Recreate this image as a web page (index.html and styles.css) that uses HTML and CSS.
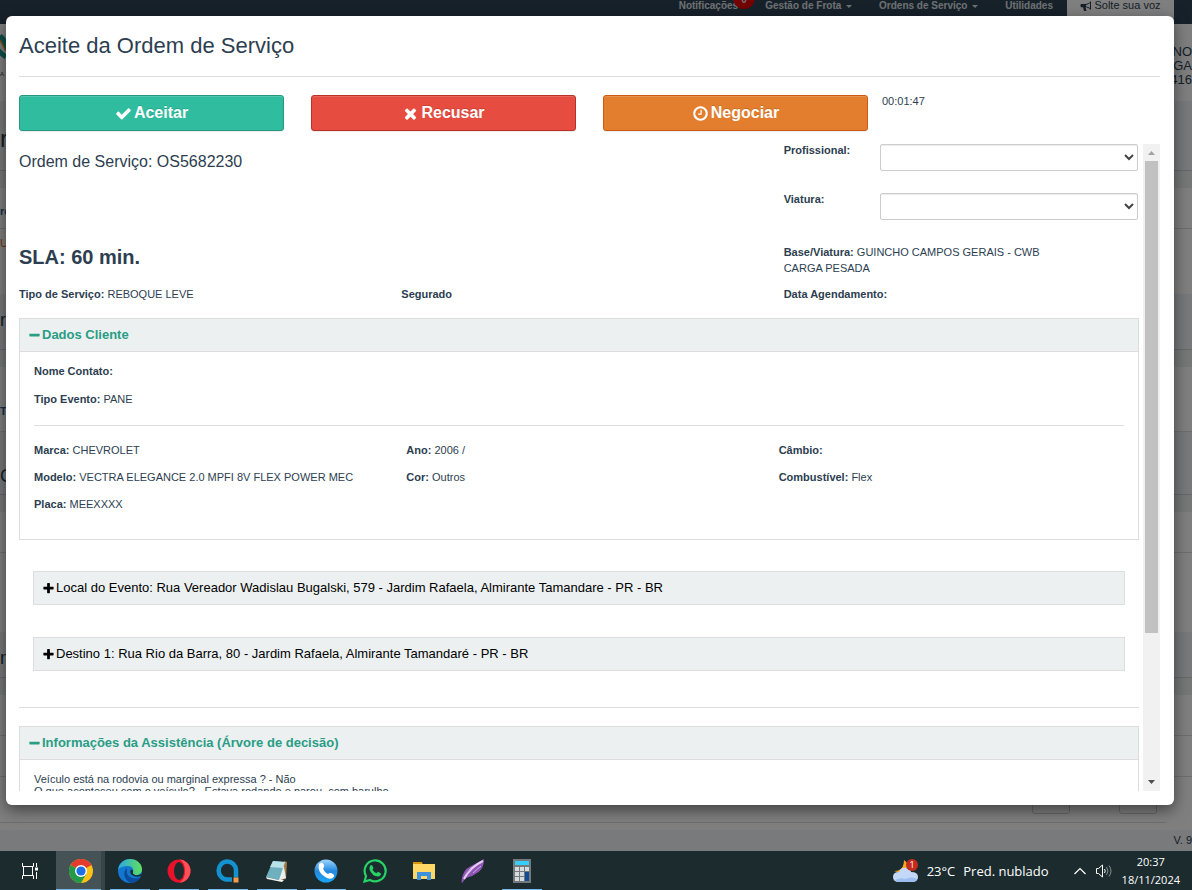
FILE: index.html
```
<!DOCTYPE html>
<html lang="pt-BR">
<head>
    <meta charset="UTF-8">
    <meta name="viewport" content="width=device-width, initial-scale=1.0">
    <title>Aceite da Ordem de Serviço</title>
    <link rel="stylesheet" href="styles.css">
</head>
<body>
    <svg class="sprite" aria-hidden="true">
        <symbol id="plus" viewBox="0 0 1792 1792"><path d="M1600 736v192q0 40-28 68t-68 28h-416v416q0 40-28 68t-68 28h-192q-40 0-68-28t-28-68v-416h-416q-40 0-68-28t-28-68v-192q0-40 28-68t68-28h416v-416q0-40 28-68t68-28h192q40 0 68 28t28 68v416h416q40 0 68 28t28 68z"/></symbol>
        <symbol id="minus" viewBox="0 0 1792 1792"><path d="M1600 736v192q0 40-28 68t-68 28h-1216q-40 0-68-28t-28-68v-192q0-40 28-68t68-28h1216q40 0 68 28t28 68z"/></symbol>
    </svg>

    <div class="browser">
        <!-- pagina atras do modal -->
        <div class="page">
            <nav class="navbar">
                <a href="#">Notificações<span class="badge">0</span></a>
                <a href="#">Gestão de Frota <i class="caret"></i></a>
                <a href="#">Ordens de Serviço <i class="caret"></i></a>
                <a href="#">Utilidades</a>
                <button class="voz" type="button">
                    <svg viewBox="0 0 12 12"><path d="M11 1v9C9 8 7.500 7.400 5.500 7.200L6.500 11H4L3 7.200H1.500Q.5 7.200.5 6V5Q.5 4 1.500 4H5C7.500 4 9.500 3 11 1zM10 3C8.500 4.300 7.300 4.700 6 4.900v1.500C7.500 6.600 8.800 7.100 10 8z" fill-rule="evenodd"/></svg>
                    Solte sua voz
                </button>
            </nav>
            <div class="top">
                <div class="logo">
                    <svg viewBox="0 0 24 28"><path d="M0 2Q9 3 15 18" fill="none" stroke="#e8a33a" stroke-width="5"/><path d="M0 5Q2 17 14 25M8 4Q14 8 18 24" fill="none" stroke="#1a9c94" stroke-width="5"/></svg>
                    <span>A</span>
                </div>
                <div class="user">RNO<br>RGA<br>416</div>
            </div>
            <div class="row head">r</div>
            <div class="row gap"></div>
            <div class="row line blue">re</div>
            <div class="row tall orange">U</div>
            <div class="row head small">r</div>
            <div class="row gap"></div>
            <div class="row line tall blue">T</div>
            <div class="row head small end">C</div>
            <div class="row gap"></div>
            <div class="row line"></div>
            <div class="row taller"></div>
            <div class="row head small last">m</div>
            <div class="row gap"></div>
            <div class="row line"></div>
            <div class="row line"></div>
            <div class="row line pager"><button type="button" aria-label="Anterior"></button><button type="button" aria-label="Próximo"></button></div>
            <div class="footer">V. 9</div>
        </div>

        <div class="backdrop"></div>

        <div class="modal" role="dialog" aria-labelledby="titulo">
            <h1 id="titulo">Aceite da Ordem de Serviço</h1>
            <div class="actions">
                <button class="btn green" type="button"><svg viewBox="0 0 1792 1792"><path d="M1671 566q0 40-28 68l-724 724-136 136q-28 28-68 28t-68-28l-136-136-362-362q-28-28-28-68t28-68l136-136q28-28 68-28t68 28l294 295 656-657q28-28 68-28t68 28l136 136q28 28 28 68z"/></svg>Aceitar</button>
                <button class="btn red" type="button"><svg viewBox="0 0 1792 1792"><path d="M1490 1322q0 40-28 68l-136 136q-28 28-68 28t-68-28l-294-294-294 294q-28 28-68 28t-68-28l-136-136q-28-28-28-68t28-68l294-294-294-294q-28-28-28-68t28-68l136-136q28-28 68-28t68 28l294 294 294-294q28-28 68-28t68 28l136 136q28 28 28 68t-28 68l-294 294 294 294q28 28 28 68z"/></svg>Recusar</button>
                <button class="btn orange-btn" type="button"><svg viewBox="0 0 1792 1792"><path d="M1024 544v448q0 14-9 23t-23 9h-320q-14 0-23-9t-9-23v-64q0-14 9-23t23-9h224v-352q0-14 9-23t23-9h64q14 0 23 9t9 23zm416 352q0-148-73-273t-198-198-273-73-273 73-198 198-73 273 73 273 198 198 273 73 273-73 198-198 73-273zm224 0q0 209-103 385.500t-279.500 279.500-385.500 103-385.500-103-279.500-279.500-103-385.500 103-385.500 279.500-279.500 385.500-103 385.500 103 279.500 279.500 103 385.500z"/></svg>Negociar</button>
                <span class="timer">00:01:47</span>
            </div>

            <div class="scroll">
                <div class="content">
                    <div class="cols intro">
                        <div class="os">
                            <h2>Ordem de Serviço: OS5682230</h2>
                        </div>
                        <form class="fields">
                            <label for="prof">Profissional:</label>
                            <select id="prof"><option></option></select>
                            <label for="viatura">Viatura:</label>
                            <select id="viatura"><option></option></select>
                        </form>
                    </div>
                    <div class="cols sla">
                        <h3>SLA: 60 min.</h3>
                        <span></span>
                        <p><b>Base/Viatura:</b> GUINCHO CAMPOS GERAIS - CWB<br>CARGA PESADA</p>
                    </div>
                    <div class="cols tipo">
                        <p><b>Tipo de Serviço:</b> REBOQUE LEVE</p>
                        <p><b>Segurado</b></p>
                        <p><b>Data Agendamento:</b></p>
                    </div>

                    <div class="panel">
                        <a class="panel-head" href="#"><svg><use href="#minus"/></svg>Dados Cliente</a>
                        <div class="panel-body">
                            <div class="contato">
                                <p><b>Nome Contato:</b></p>
                                <p><b>Tipo Evento:</b> PANE</p>
                            </div>
                            <div class="cols veiculo">
                                <p><b>Marca:</b> CHEVROLET</p>
                                <p><b>Ano:</b> 2006 /</p>
                                <p><b>Câmbio:</b></p>
                                <p><b>Modelo:</b> VECTRA ELEGANCE 2.0 MPFI 8V FLEX POWER MEC</p>
                                <p><b>Cor:</b> Outros</p>
                                <p><b>Combustível:</b> Flex</p>
                                <p><b>Placa:</b> MEEXXXX</p>
                            </div>
                        </div>
                    </div>

                    <div class="locais">
                        <a class="local" href="#"><svg><use href="#plus"/></svg>Local do Evento: Rua Vereador Wadislau Bugalski, 579 - Jardim Rafaela, Almirante Tamandare - PR - BR</a>
                        <a class="local" href="#"><svg><use href="#plus"/></svg>Destino 1: Rua Rio da Barra, 80 - Jardim Rafaela, Almirante Tamandaré - PR - BR</a>
                    </div>

                    <div class="panel">
                        <a class="panel-head" href="#"><svg><use href="#minus"/></svg>Informações da Assistência (Árvore de decisão)</a>
                        <div class="panel-body info">
                            Veículo está na rodovia ou marginal expressa ? - Não<br>
                            O que aconteceu com o veículo? - Estava rodando e parou, com barulho
                        </div>
                    </div>
                </div>
                <div class="bar">
                    <svg class="up" viewBox="0 0 17 17"><path d="M5 11h7L8.500 7z"/></svg>
                    <div class="track"><div class="thumb"></div></div>
                    <svg class="down" viewBox="0 0 17 17"><path d="M5 6h7L8.500 10z"/></svg>
                </div>
            </div>
        </div>
    </div>

    <div class="taskbar">
        <button class="task view" type="button" aria-label="Visão de tarefas"><svg viewBox="0 0 24 24" fill="none" stroke="#fff"><path d="M4.500 4v3.500h11V4M4.500 20v-3.500h11V20M5.500 7.500v9M14.500 7.500v9M18.500 4v4M18.500 13v7"/><path d="M17 8.500h3v3h-3z" fill="#fff" stroke="none"/></svg></button>
        <button class="task open current" type="button" aria-label="Chrome"><svg viewBox="0 0 24 24"><circle cx="12" cy="12" r="12" fill="#fbc116"/><path d="M12 12 1.600 6A12 12 0 0 1 22.400 6z" fill="#e33b2e"/><path d="M1.600 6A12 12 0 0 0 12 24l5.200-9L12 12z" fill="#229a49"/><path d="M12 6h10.400L17 8z" fill="#e33b2e"/><circle cx="12" cy="12" r="6" fill="#fff"/><circle cx="12" cy="12" r="4.600" fill="#1d6fe8"/></svg></button>
        <button class="task open" type="button" aria-label="Edge"><svg viewBox="0 0 24 24"><defs><linearGradient id="e1" x1="0" x2="1"><stop stop-color="#2aa6e8"/><stop offset="1" stop-color="#5fe05a"/></linearGradient></defs><circle cx="12" cy="12" r="12" fill="#1377cf"/><path d="M0 11C1 4 6 0 12 0c7 0 12 5 12 10 0 4-3 6-6 6-3 0-4-1-3-3 1-3-1-6-5-6C5 7 1 9 0 11z" fill="url(#e1)"/><path d="M9 9c-5 4-3 12 4 15 4 0 8-3 10-6-5 3-13 1-14-4-.3-2 0-3.500 0-5z" fill="#0c4c9c"/><path d="M13 10.500q-2 3 1 5.500 4 3 9 1l1.500-2.500q-4 2.500-7.500 1.500-3-1-2-3.300.5-1.700-2-2.200z" fill="#1b2b2e"/></svg></button>
        <button class="task open" type="button" aria-label="Opera"><svg viewBox="0 0 24 24"><ellipse cx="12" cy="12" rx="11.500" ry="11.500" fill="#e8132b"/><path d="M12 .5a11.500 11.500 0 0 1 0 23c4-1 6-6 6-11.500S16 1.500 12 .5z" fill="#ff5058"/><ellipse cx="12" cy="12" rx="5" ry="9" fill="#1b2b2e"/></svg></button>
        <button class="task open" type="button" aria-label="Atendimento"><svg viewBox="0 0 24 24"><path d="M20 18.500V11A8.700 9 0 1 0 11 20.500h5" fill="none" stroke="#1492d0" stroke-width="4.500"/><path d="M17.500 18.500h5v5h-5z" fill="#f59a4a"/></svg></button>
        <button class="task open" type="button" aria-label="Bloco de notas"><svg viewBox="0 0 24 24"><path d="M19 2l3 1-1 17-5 1z" fill="#a67a43"/><path d="M18 3l3 16-8 3z" fill="#e9eef0"/><path d="M8 2l12 1-6 18L1 18z" fill="#6fb0be"/><path d="M8 2l12 1-2 6-13-1z" fill="#b9e2e9"/><path d="M1 18l13 3 5 0-2 2-15-3z" fill="#f5f5f0"/></svg></button>
        <button class="task open" type="button" aria-label="Telefone"><svg viewBox="0 0 24 24"><defs><linearGradient id="p1" x2="0" y2="1"><stop stop-color="#9bd6ff"/><stop offset=".5" stop-color="#2488de"/><stop offset="1" stop-color="#19a5f2"/></linearGradient></defs><circle cx="12" cy="12" r="11.500" fill="url(#p1)"/><path d="M5 5q3-3 4.500 0 1.500 3-.5 4 1 4 5 6 2-2 5 0 2.500 2-.5 4-3 2-8-1.500Q3 13 5 5z" fill="#fff"/></svg></button>
        <button class="task" type="button" aria-label="WhatsApp"><svg viewBox="0 0 24 24"><path d="M1.500 22.500 3 17a10.500 10.500 0 1 1 4 4z" fill="none" stroke="#25d366" stroke-width="2.200"/><path d="M7 7q1.500-2 2.500 0l1 2.200-1 1.600q1.500 2.500 4 3.500l1.300-1.500 3 1.500q.5 3-3 3.300Q9 17 6.500 10.500 6.300 8.500 7 7z" fill="#25d366"/></svg></button>
        <button class="task" type="button" aria-label="Arquivos"><svg viewBox="0 0 24 24"><path d="M1 3h9l1 3H1z" fill="#d9920c"/><path d="M1 5h22v15H1z" fill="#ffd767"/><path d="M5 20v-7h14v8h-4v-4H9v4H5z" fill="#3b91dd"/></svg></button>
        <button class="task" type="button" aria-label="Pluma"><svg viewBox="0 0 24 24"><path d="M23 0q0 10-7 14-5 4-11 5l-4 5-.5-1Q1 11 10 7 16 4 23 0z" fill="#8e55b5"/><path d="M22 2Q9 8 3 20" fill="none" stroke="#e6cdf2" stroke-width="2"/><path d="M20 7 12 14M10 10 5 15" stroke="#cda6e2" fill="none"/></svg></button>
        <button class="task open" type="button" aria-label="Calculadora"><svg viewBox="0 0 24 24"><path d="M3 0h18v24H3z" fill="#73797d"/><path d="M5 2h14v4H5z" fill="#35cdfa"/><path d="M5 8h4v4H5zM10 8h4v4h-4zM15 8h4v4h-4zM5 13h4v4H5zM10 13h4v4h-4zM5 18h4v4H5zM10 18h4v4h-4z" fill="#d6dbde"/><path d="M15 13h4v9h-4z" fill="#114d91"/></svg></button>

        <div class="tray">
            <svg class="weather" viewBox="0 0 26 24"><path d="M11 1q6 4 2 9-5 5-12 2 7 0 9-5Q11 4 11 1z" fill="#f7a823"/><path d="M6 23q-6 0-6-5t6-5q2-5 7-4 5 1 5 4 7 0 7 5 0 5-6 5z" fill="#c3d8f8"/><path d="M2 21q5-3 10-1 7-3 12 0-1 3-5 3H6q-3 0-4-2z" fill="#9dbdf0"/><circle cx="19" cy="6" r="6" fill="#c42b1c"/><text x="19" y="9" text-anchor="middle" font-size="9" fill="#fff">1</text></svg>
            <span class="temp">23°C</span>
            <span class="cond">Pred. nublado</span>
            <svg class="chev" viewBox="0 0 12 12"><path d="M.5 9 6 3.500 11.500 9" fill="none" stroke="#fff" stroke-width="1.200"/></svg>
            <svg class="sound" viewBox="0 0 18 16" fill="none" stroke="#fff"><path d="M1.500 5.500h2l4-3.500v12l-4-3.500h-2z"/><path d="M9.500 6q1.500 2 0 4"/><path d="M11.500 4q3 4 0 8M14 2.500q4 5.500 0 11" stroke="#84908f"/></svg>
            <div class="clock">20:37<br>18/11/2024</div>
        </div>
    </div>
</body>
</html>
```
FILE: styles.css
```
* {
    box-sizing: border-box;
    margin: 0;
    padding: 0;
}
body {
    display: flex;
    flex-direction: column;
    height: 100vh;
    overflow: hidden;
    font: 11px/16px "Liberation Sans", Arial, sans-serif;
    color: #2c3e50;
}
a {
    color: inherit;
    text-decoration: none;
}
button {
    border: 0;
    font-family: inherit;
}
.sprite {
    display: none;
}
.browser {
    position: relative;
    flex: 1;
    min-height: 0;
    overflow: hidden;
    background-color: #fff;
}

/* pagina de fundo */
.page {
    display: flex;
    flex-direction: column;
    height: 100%;
}
.navbar {
    display: flex;
    justify-content: flex-end;
    gap: 27px;
    height: 24px;
    padding-right: 18px;
    background-color: #2f4254;
    color: #dfe3e6;
    font-size: 10px;
    font-weight: bold;
    line-height: 12px;
}
.navbar a {
    position: relative;
}
.badge {
    position: absolute;
    top: -13px;
    right: -17px;
    width: 22px;
    height: 22px;
    border-radius: 50%;
    background-color: #e80000;
    text-align: center;
    line-height: 26px;
}
.caret {
    display: inline-block;
    margin-left: 2px;
    border: 3px solid transparent;
    border-top-color: #dfe3e6;
    border-bottom: 0;
    vertical-align: middle;
}
.voz {
    display: flex;
    justify-content: center;
    gap: 2px;
    width: 107px;
    margin-left: -13px;
    background-color: #fff;
    color: #2c3e50;
    font-size: 11px;
    line-height: 11px;
}
.voz svg {
    width: 12px;
    height: 12px;
    fill: #2c3e50;
}
.top {
    display: flex;
    justify-content: space-between;
    height: 77px;
    background-color: #fff;
}
.logo {
    width: 6px;
    padding-top: 8px;
    overflow: hidden;
    font-size: 6px;
    line-height: 16px;
}
.logo svg {
    width: 24px;
    height: 28px;
    margin-left: -8px;
}
.user {
    padding-top: 21px;
    font-size: 13px;
    line-height: 14px;
    text-align: right;
}
.row {
    flex: 0 0 auto;
    height: 44px;
    line-height: 46px;
}
.row.line {
    height: 41px;
    border-bottom: 1px solid #ddd;
}
.row.tall {
    height: 65px;
    line-height: 28px;
}
.row.taller {
    height: 79px;
}
.row.head {
    height: 70px;
    border-bottom: 1px solid #ccd1d3;
    background-color: #f1f3f6;
    font-size: 24px;
    line-height: 76px;
}
.row.head.small {
    height: 56px;
    font-size: 18px;
    line-height: 52px;
}
.row.head.end {
    height: 63px;
    line-height: 88px;
}
.row.head.last {
    height: 46px;
}
.row.gap {
    height: 17px;
    background-color: #ecf0f1;
}
.row.line.tall {
    line-height: 88px;
}
.blue {
    color: #2c5d9c;
    font-weight: bold;
}
.orange {
    color: #d96a1c;
}
.row.pager {
    display: flex;
    flex: 1;
    justify-content: flex-end;
    gap: 49px;
    margin-right: 26px;
    padding-bottom: 8px;
    padding-right: 9px;
}
.pager button {
    align-self: flex-end;
    width: 38px;
    height: 32px;
    border: 1px solid #ccc;
    border-radius: 3px;
    background-color: #fff;
}
.footer {
    height: 21px;
    margin-top: 7px;
    background-color: #f2f4f6;
    text-align: right;
    line-height: 21px;
}

.backdrop {
    position: absolute;
    inset: 0;
    background-color: rgba(0, 0, 0, .5);
}
.modal {
    position: absolute;
    inset: 16px 18px 46px 6px;
    display: flex;
    flex-direction: column;
    padding: 0 14px 14px 13px;
    border-radius: 6px;
    background-color: #fff;
    box-shadow: 0 5px 15px rgba(0, 0, 0, .5);
}
.modal h1 {
    height: 61px;
    border-bottom: 1px solid #ddd;
    font-size: 22px;
    font-weight: normal;
    line-height: 59px;
}
.actions {
    display: grid;
    grid-template-columns: repeat(4, 1fr);
    gap: 27px;
    padding: 18px 0 13px;
}
.btn {
    display: flex;
    align-items: center;
    justify-content: center;
    gap: 2px;
    height: 36px;
    border: 1px solid #26987f;
    border-radius: 3px;
    color: #fff;
    font-size: 16px;
    font-weight: bold;
    text-shadow: 0 -1px 0 rgba(0, 0, 0, .15);
    box-shadow: inset 0 1px 0 rgba(255, 255, 255, .15), 0 1px 1px rgba(0, 0, 0, .08);
}
.btn svg {
    width: 17px;
    height: 17px;
    fill: #fff;
}
.green {
    background-color: #2fbc9f;
}
.red {
    border-color: #b73328;
    background-color: #e64c3f;
}
.orange-btn {
    border-color: #ce5a12;
    background-color: #e27e2e;
}
.timer {
    margin-left: -13px;
    line-height: 13px;
}

.scroll {
    display: flex;
    flex: 1;
    gap: 4px;
    min-height: 0;
}
.content {
    flex: 1;
    overflow: hidden;
}
.cols {
    display: grid;
    grid-template-columns: repeat(3, 1fr);
    column-gap: 27px;
}
.os {
    grid-column: span 2;
}
.intro {
    height: 100px;
}
.intro h2 {
    font-size: 16px;
    font-weight: normal;
    line-height: 36px;
}
.fields {
    display: grid;
    grid-template-columns: 96px 1fr;
    grid-auto-rows: 27px;
    row-gap: 22px;
    padding-right: 1px;
    font-weight: bold;
    line-height: 13px;
}
.fields select {
    border: 1px solid #ccc;
    border-radius: 2px;
    background-color: #fff;
    box-shadow: inset 0 1px 1px rgba(0, 0, 0, .08);
    color: #444;
}
.sla {
    height: 42px;
}
.sla h3 {
    font-size: 20px;
    line-height: 26px;
}
.tipo {
    margin-bottom: 16px;
}
.panel {
    border: 1px solid #ddd;
}
.panel-head,
.local {
    display: flex;
    align-items: center;
    gap: 1px;
    height: 33px;
    padding-left: 8px;
    border-bottom: 1px solid #ddd;
    background-color: #ecf0f1;
    font-size: 13px;
}
.panel-head {
    color: #2a9d85;
    font-weight: bold;
}
.panel-head svg,
.local svg {
    width: 13px;
    height: 13px;
    fill: currentColor;
}
.panel-body {
    padding: 11px 14px 27px;
}
.contato {
    display: grid;
    row-gap: 12px;
    margin-bottom: 16px;
    padding-bottom: 18px;
    border-bottom: 1px solid #ddd;
}
.veiculo {
    row-gap: 11px;
}
.locais {
    display: grid;
    gap: 32px;
    margin-bottom: 18px;
    padding: 31px 14px 36px;
    border-bottom: 1px solid #ddd;
}
.local {
    height: 34px;
    border: 1px solid #ddd;
    color: #000;
}
.info {
    padding-top: 13px;
    line-height: 12px;
}

/* barra de rolagem */
.bar {
    display: flex;
    flex-direction: column;
    width: 17px;
    background-color: #f1f1f1;
}
.bar svg {
    width: 17px;
    height: 17px;
}
.up {
    fill: #a3a3a3;
}
.down {
    fill: #505050;
}
.track {
    flex: 1;
    padding: 0 2px;
}
.thumb {
    height: 77%;
    background-color: #c1c1c1;
}

/* barra de tarefas */
.taskbar {
    display: flex;
    height: 39px;
    padding-left: 3px;
    background-color: #1b2b2e;
    color: #fff;
    font-family: "Open Sans", "Noto Sans", sans-serif;
}
.task {
    display: flex;
    align-items: center;
    justify-content: center;
    width: 49px;
    background: none;
}
.task.view {
    width: 53px;
}
.task svg {
    width: 24px;
    height: 24px;
}
.task.open {
    background: linear-gradient(#76b9ed, #76b9ed) bottom / 40px 1px no-repeat;
}
.task.current {
    background-color: #465356;
    background-size: 49px 1px;
    box-shadow: inset -4px 0 #364548;
}
.tray {
    display: flex;
    align-items: center;
    margin-left: auto;
    padding-right: 12px;
}
.weather {
    width: 26px;
    height: 24px;
}
.temp,
.cond {
    margin-left: 8px;
    font-size: 13px;
}
.chev {
    width: 12px;
    height: 12px;
    margin-left: 25px;
}
.sound {
    width: 18px;
    height: 16px;
    margin: 0 9px;
}
.clock {
    font-size: 11px;
    line-height: 18px;
    text-align: center;
}
```
